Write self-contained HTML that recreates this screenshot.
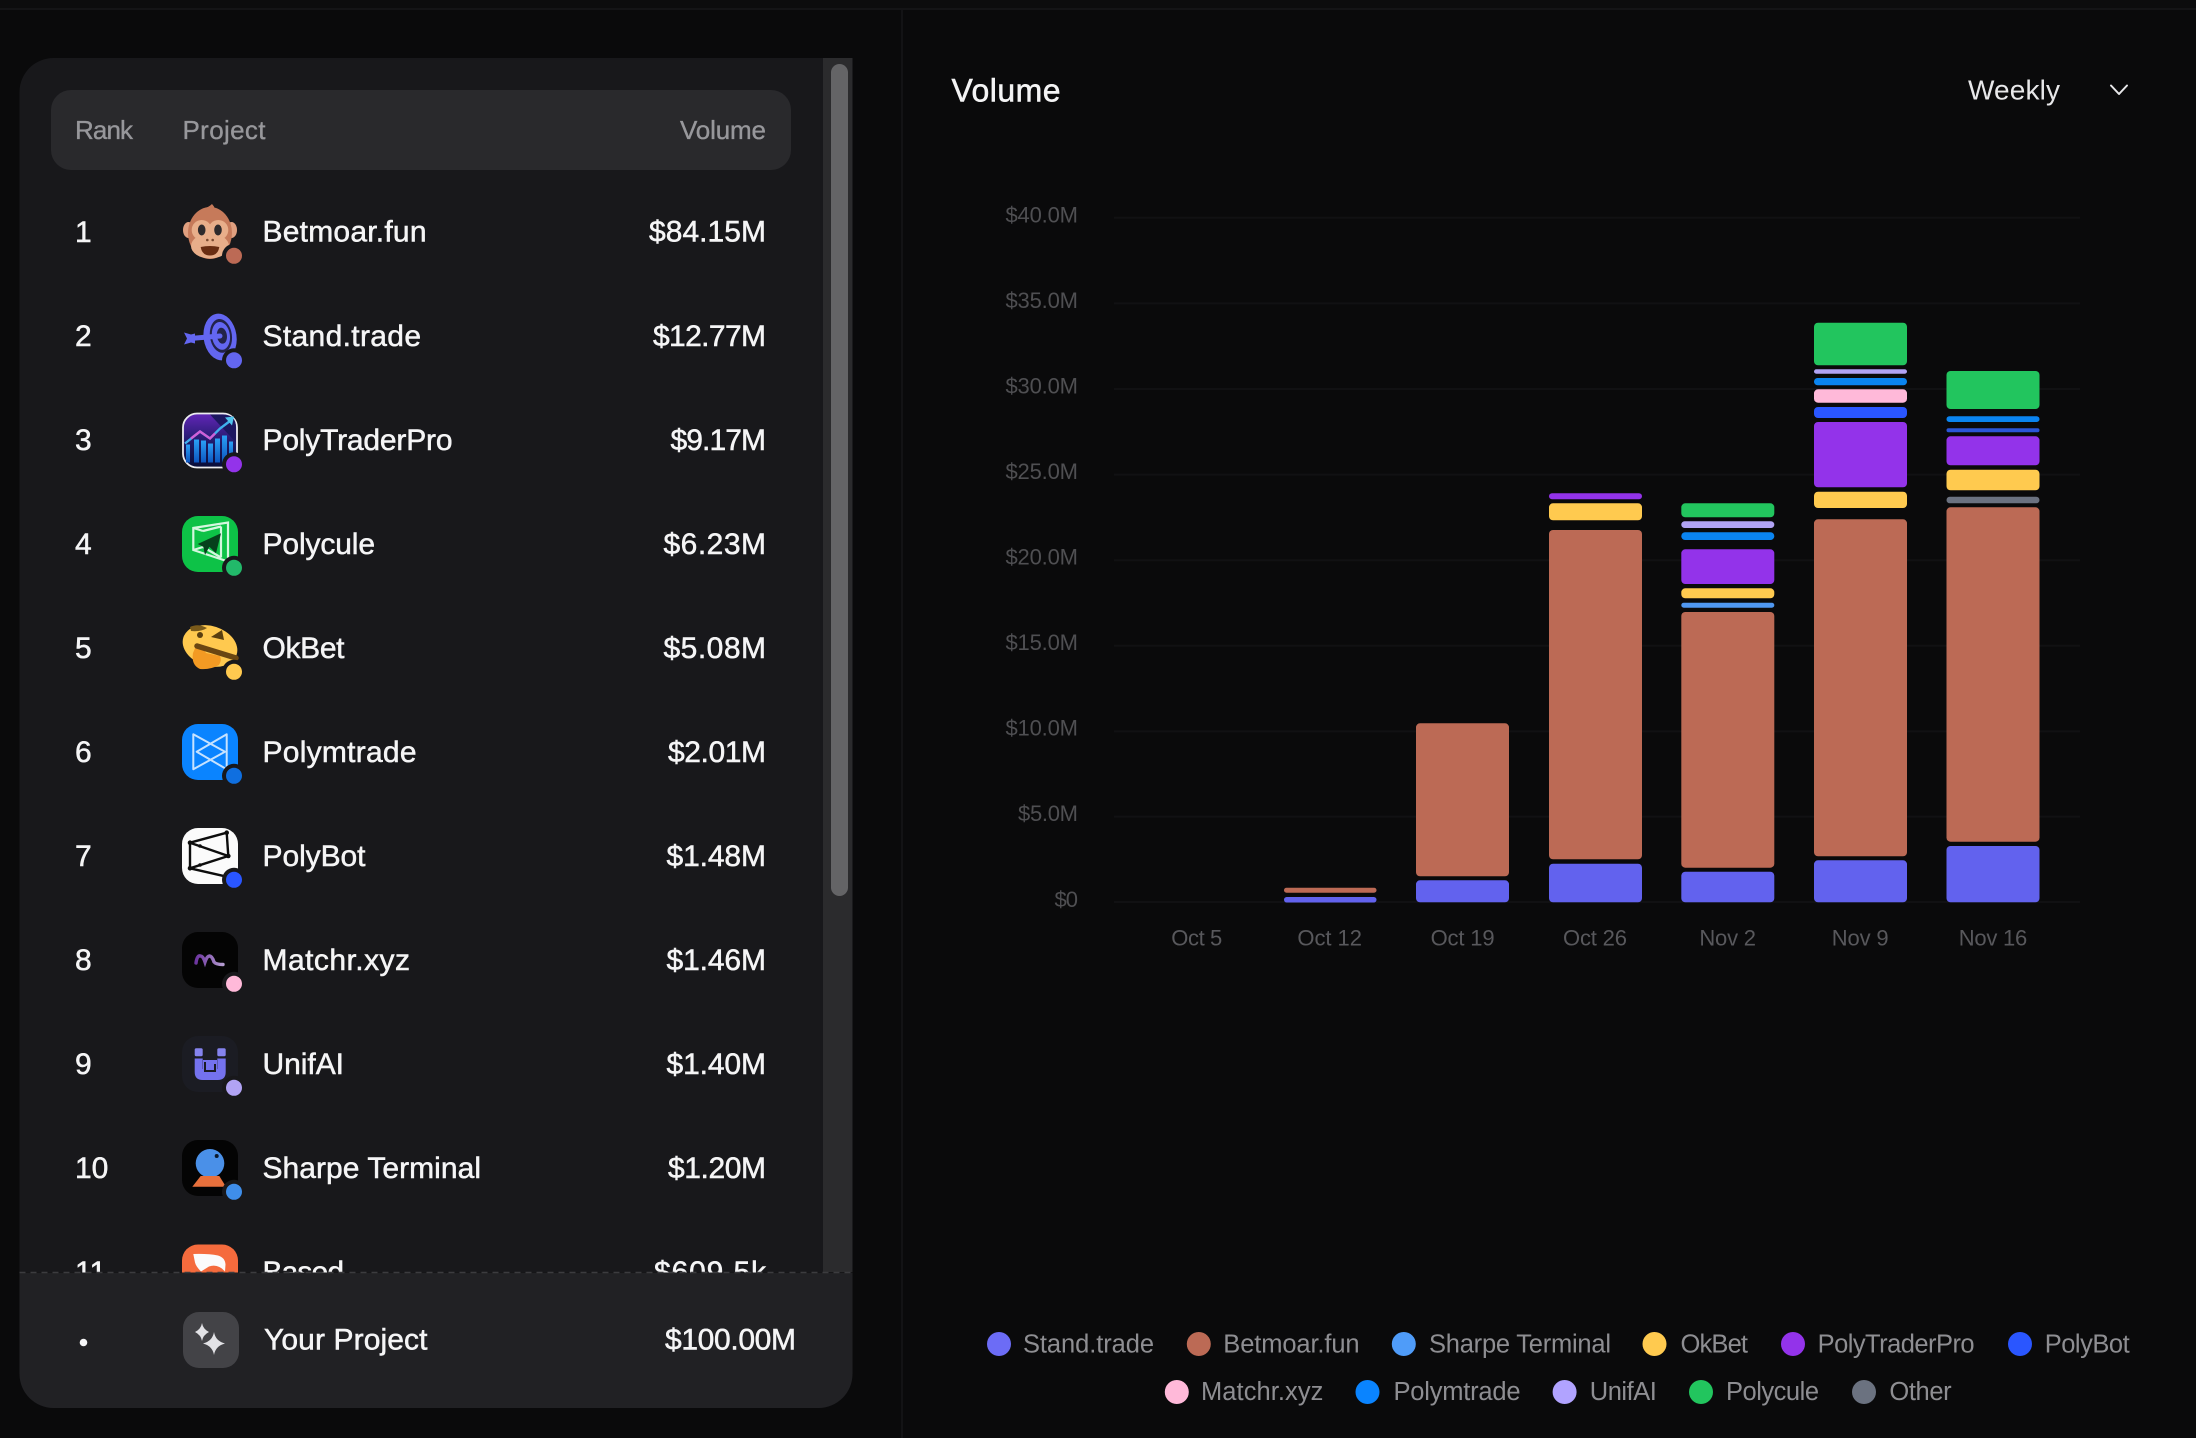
<!DOCTYPE html>
<html lang="en"><head><meta charset="utf-8"><title>Volume Leaderboard</title>
<style>
html,body{margin:0;padding:0;background:#0a0a0b;width:2196px;height:1438px;overflow:hidden}
svg{display:block}
text{font-family:"Liberation Sans",Arial,sans-serif}
.rk,.nm,.vl{font-size:30px;fill:#f5f5f6;stroke:#f5f5f6;stroke-width:.5px}
.hd{font-size:26px;fill:#97979b;stroke:#97979b;stroke-width:.35px}
.ya{font-size:22px;fill:#4f4f52}
.xa{font-size:22px;fill:#58585c}
.lg{font-size:25.5px;fill:#8e8e92}
</style></head><body>
<svg width="2196" height="1438" viewBox="0 0 2196 1438" xmlns="http://www.w3.org/2000/svg">
<defs>
<linearGradient id="ptp" x1="0" y1="0" x2="0" y2="1"><stop offset="0" stop-color="#6326b8"/><stop offset=".55" stop-color="#1d1a66"/><stop offset="1" stop-color="#070d38"/></linearGradient>
<linearGradient id="ptb" x1="0" y1="0" x2="0" y2="1"><stop offset="0" stop-color="#2aa0f5"/><stop offset="1" stop-color="#0d55c0"/></linearGradient>
<linearGradient id="mts" x1="0" y1="0" x2="1" y2="0"><stop offset="0" stop-color="#6d35a0"/><stop offset="1" stop-color="#b49cd0"/></linearGradient>
</defs>
<rect width="2196" height="1438" fill="#0a0a0b"/>
<rect width="2196" height="8" fill="#0c0c0d"/>
<rect y="8" width="2196" height="2" fill="#141416"/>
<rect x="901" y="10" width="2" height="1428" fill="#131315"/>

<!-- left panel -->
<path d="M54 58H852.500V1272H19.500V92A34 34 0 0 1 54 58Z" fill="#18181b"/>
<rect x="823" y="58" width="29.500" height="1214" fill="#2b2b2d"/>
<rect x="831" y="64" width="17" height="832" rx="8.500" fill="#646466"/>
<rect x="51" y="90" width="740" height="80" rx="20" fill="#29292c"/>
<text class="hd" x="75" y="139" textLength="58">Rank</text>
<text class="hd" x="182.500" y="139" textLength="83">Project</text>
<text class="hd" x="680" y="139" textLength="86">Volume</text>

<!-- row 1 -->
<text class="rk" x="75" y="242">1</text><text class="nm" x="262.500" y="241.700" textLength="164">Betmoar.fun</text><text class="vl" x="649" y="241.700" textLength="117">$84.15M</text>
<g transform="translate(182,204)">
<ellipse cx="6.500" cy="26" rx="5.500" ry="8" fill="#E0A080"/><ellipse cx="49.500" cy="26" rx="5.500" ry="8" fill="#E0A080"/>
<path d="M21 5Q27 3 30 0Q32 2 33 5L28 8Z" fill="#C67A5A"/>
<ellipse cx="28" cy="29" rx="22" ry="26" fill="#C67A5A"/>
<circle cx="19.700" cy="26" r="10" fill="#E8AE8A"/><circle cx="36.300" cy="26" r="10" fill="#E8AE8A"/>
<ellipse cx="28" cy="42" rx="19" ry="12.500" fill="#E8AE8A"/>
<ellipse cx="19.700" cy="26" rx="3.800" ry="5.500" fill="#2e2a2c"/><ellipse cx="36" cy="26" rx="3.800" ry="5.500" fill="#2e2a2c"/>
<circle cx="25.300" cy="36" r="1.300" fill="#7a4a30"/><circle cx="30.700" cy="36" r="1.300" fill="#7a4a30"/>
<path d="M18.700 43Q28 41 37.300 43Q36 51.500 28 51.500Q20 51.500 18.700 43Z" fill="#6a2d12"/>
<circle cx="52" cy="51.800" r="12" fill="#18181b"/><circle cx="52" cy="51.800" r="8" fill="#BC6A55"/>
</g>

<!-- row 2 -->
<text class="rk" x="75" y="346">2</text><text class="nm" x="262.500" y="346" textLength="158.500">Stand.trade</text><text class="vl" x="653" y="346" textLength="113">$12.77M</text>
<g transform="translate(182,308.500)">
<g transform="rotate(-8 38 28)">
<ellipse cx="38" cy="28.500" rx="16.500" ry="23.500" fill="#6366F1"/><ellipse cx="39" cy="27.500" rx="11" ry="17" fill="#23234a"/>
<ellipse cx="39" cy="27.500" rx="9" ry="14" fill="#6366F1"/><ellipse cx="40" cy="27.500" rx="5" ry="8" fill="#23234a"/></g>
<path d="M8 30L38 27.500" stroke="#6366F1" stroke-width="5" stroke-linecap="round" fill="none"/>
<path d="M2 24L9 26L13 25L13 35L9 34L2 36L5 30Z" fill="#6366F1"/>
<circle cx="52" cy="51.800" r="12" fill="#18181b"/><circle cx="52" cy="51.800" r="8" fill="#6366F1"/>
</g>

<!-- row 3 -->
<text class="rk" x="75" y="450">3</text><text class="nm" x="262.500" y="450" textLength="190">PolyTraderPro</text><text class="vl" x="670.500" y="450" textLength="95.500">$9.17M</text>
<g transform="translate(182,412.500)">
<rect x="1" y="1" width="54" height="54" rx="14" fill="url(#ptp)" stroke="#ececf0" stroke-width="1.800"/>
<path d="M28 2H41Q54 2 54 15V30Z" fill="#1c1760"/>
<g fill="url(#ptb)"><rect x="4" y="32" width="4" height="18"/><rect x="12" y="27" width="5" height="23"/><rect x="19" y="28" width="5" height="22"/><rect x="26" y="31" width="5" height="19"/><rect x="33" y="26" width="5" height="24"/><rect x="40" y="23" width="5" height="27"/><rect x="47" y="29" width="4" height="20"/></g>
<path d="M3 31L18 19L28 26L38 16L50 7" fill="none" stroke="#3fb0ee" stroke-width="2.400"/>
<path d="M9 26L18 19L28 26L33 21" fill="none" stroke="#d05fd8" stroke-width="2.400"/>
<path d="M43 5L52 4L50 13Z" fill="#4fc4ee"/>
<circle cx="52" cy="51.800" r="12" fill="#18181b"/><circle cx="52" cy="51.800" r="8" fill="#9333EA"/>
</g>

<!-- row 4 -->
<text class="rk" x="75" y="554">4</text><text class="nm" x="262.500" y="554" textLength="112.500">Polycule</text><text class="vl" x="663.500" y="554" textLength="102.500">$6.23M</text>
<g transform="translate(182,516)">
<rect width="56" height="56" rx="16" fill="#0DC247"/>
<path d="M11.300 12V34L46 45.500V6.500ZM21 15L39 10.500M21 31L39 41.500M39 10.500V41.500M11.300 12L21 15M11.300 34L21 31" fill="none" stroke="#d4f7df" stroke-width="2.200"/>
<path d="M15.700 28L39 17.300L34 37.300L27.300 30.700L23 39L21.300 30.700Z" fill="#06401c"/>
<circle cx="52" cy="51.800" r="12" fill="#18181b"/><circle cx="52" cy="51.800" r="8" fill="#22B96A"/>
</g>

<!-- row 5 -->
<text class="rk" x="75" y="658">5</text><text class="nm" x="262.500" y="658" textLength="82">OkBet</text><text class="vl" x="663.500" y="658" textLength="102.500">$5.08M</text>
<g transform="translate(182,620)">
<g transform="rotate(18 28 26)"><ellipse cx="28" cy="26" rx="28" ry="20" fill="#FFC94F"/></g>
<path d="M11 33Q9 45 18 49Q28 50 37 45Q40 40 38 36L24 33L22 30L14 26Z" fill="#F39A23"/>
<path d="M8 7Q16 3 25 8Q19 12 9 11Z" fill="#7a5a1a"/>
<circle cx="18" cy="15" r="3" fill="#5a3f10"/>
<path d="M29 17L40 10L42 20Z" fill="#5a3f10"/>
<path d="M15 26L54 38" stroke="#6a4612" stroke-width="5.500" stroke-linecap="round"/>
<circle cx="52" cy="51.800" r="12" fill="#18181b"/><circle cx="52" cy="51.800" r="8" fill="#FFC94F"/>
</g>

<!-- row 6 -->
<text class="rk" x="75" y="762">6</text><text class="nm" x="262.500" y="762" textLength="154">Polymtrade</text><text class="vl" x="668" y="762" textLength="98">$2.01M</text>
<g transform="translate(182,724)">
<rect width="56" height="56" rx="16" fill="#0A84FF"/>
<path d="M11.300 10.300V45.300L43 27.700L11.300 10.300ZM44.700 10.300V45.300L14.700 27.700L44.700 10.300Z" fill="none" stroke="#c6e2ff" stroke-width="2" stroke-linejoin="round"/>
<circle cx="52" cy="51.800" r="12" fill="#18181b"/><circle cx="52" cy="51.800" r="8" fill="#0F6FE0"/>
</g>

<!-- row 7 -->
<text class="rk" x="75" y="866">7</text><text class="nm" x="262.500" y="866" textLength="103">PolyBot</text><text class="vl" x="666.500" y="866" textLength="99.500">$1.48M</text>
<g transform="translate(182,828)">
<rect width="56" height="56" rx="16" fill="#fbfbfb"/>
<path d="M8 14.700L44.700 4.700L46.300 28L8 40.300ZM8 14.700L46.300 28M8 40.300L44.700 48.700" fill="none" stroke="#0d0d0d" stroke-width="2.400" stroke-linejoin="round"/>
<g fill="#0d0d0d"><circle cx="8" cy="14.700" r="2.300"/><circle cx="44.700" cy="4.700" r="2.300"/><circle cx="46.300" cy="28" r="2.300"/><circle cx="8" cy="40.300" r="2.300"/><circle cx="18" cy="18" r="1.800"/><circle cx="18" cy="37" r="1.800"/></g>
<circle cx="52" cy="51.800" r="12" fill="#18181b"/><circle cx="52" cy="51.800" r="8" fill="#2A56FF"/>
</g>

<!-- row 8 -->
<text class="rk" x="75" y="970">8</text><text class="nm" x="262.500" y="970" textLength="147.500">Matchr.xyz</text><text class="vl" x="666.500" y="970" textLength="99.500">$1.46M</text>
<g transform="translate(182,932)">
<rect width="56" height="56" rx="16" fill="#040404"/>
<path d="M14 31Q15 23 18.500 24Q21 24 23 30Q25 24 27.500 24Q30 24 32 30Q34 32.500 41 32.500" fill="none" stroke="url(#mts)" stroke-width="3.400" stroke-linecap="round"/>
<circle cx="52" cy="51.800" r="12" fill="#18181b"/><circle cx="52" cy="51.800" r="8" fill="#FFB9D9"/>
</g>

<!-- row 9 -->
<text class="rk" x="75" y="1074">9</text><text class="nm" x="262.500" y="1074" textLength="81.500">UnifAI</text><text class="vl" x="666.500" y="1074" textLength="99.500">$1.40M</text>
<g transform="translate(182,1036)">
<rect width="56" height="56" rx="16" fill="#1b1c23"/>
<rect x="12.700" y="12.300" width="8" height="8" rx="1.500" fill="#8583ee"/><rect x="35.300" y="12.300" width="8.400" height="8" rx="1.500" fill="#8583ee"/>
<path d="M12.700 22.500H20.700V33H35.300V22.500H43.700V36Q43.700 44 35.700 44H20.700Q12.700 44 12.700 36Z" fill="#7472ee"/>
<path d="M21 24H35V33H21Z" fill="#7472ee"/>
<path d="M23 26V35H33V28" fill="none" stroke="#1b1c23" stroke-width="2"/>
<circle cx="52" cy="51.800" r="12" fill="#18181b"/><circle cx="52" cy="51.800" r="8" fill="#B1A3F4"/>
</g>

<!-- row 10 -->
<text class="rk" x="75" y="1178">10</text><text class="nm" x="262.500" y="1178" textLength="218.500">Sharpe Terminal</text><text class="vl" x="668" y="1178" textLength="98">$1.20M</text>
<g transform="translate(182,1140)">
<rect width="56" height="56" rx="16" fill="#040404"/>
<circle cx="28" cy="23.300" r="14.300" fill="#4A90E8"/><circle cx="34.700" cy="16" r="2" fill="#0c1a2c"/>
<path d="M18.700 36H37.300L44 46.700H10.300Z" fill="#E8703C"/>
<circle cx="52" cy="51.800" r="12" fill="#18181b"/><circle cx="52" cy="51.800" r="8" fill="#3F8EEA"/>
</g>

<!-- row 11 -->
<text class="rk" x="75" y="1282">11</text><text class="nm" x="262.500" y="1282" textLength="81.500">Based</text><text class="vl" x="654" y="1282" textLength="112">$609.5k</text>
<g transform="translate(182,1244.500)">
<rect width="56" height="56" rx="16" fill="#F56B3D"/>
<path d="M11.300 9.500Q26 9 36 11Q43 13 43.500 20L43 27Q36 19 27 22L19 27Q14 22 13 18Z" fill="#fbfbfb"/>
</g>

<!-- footer -->
<path d="M19.500 1272.500H852.500V1374A34 34 0 0 1 818.500 1408H53.500A34 34 0 0 1 19.500 1374Z" fill="#212124"/>
<line x1="19.500" y1="1272.500" x2="852.500" y2="1272.500" stroke="#3c3c3f" stroke-width="1.500" stroke-dasharray="6 5"/>
<circle cx="83.500" cy="1342.500" r="3.800" fill="#f5f5f6"/>
<rect x="183" y="1312" width="56" height="56" rx="16" fill="#434347"/>
<path d="M202 1323Q203 1329 209 1332Q203 1335 202 1341Q201 1335 195 1332Q201 1329 202 1323Z" fill="#e2e2e6"/>
<path d="M214 1332Q215.500 1341 225 1343.500Q215.500 1346 214 1355Q212.500 1346 203 1343.500Q212.500 1341 214 1332Z" fill="#e2e2e6"/>
<text class="nm" x="264" y="1349.300" textLength="163.500">Your Project</text>
<text class="vl" x="665" y="1349.300" textLength="131">$100.00M</text>

<!-- right header -->
<text x="951.500" y="101.500" font-size="32" fill="#f4f4f5" stroke="#f4f4f5" stroke-width=".5" textLength="109">Volume</text>
<text x="1968" y="99.500" font-size="28" fill="#e8e8ea" textLength="92">Weekly</text>
<path d="M2111 85.500L2119 94L2127 85.500" fill="none" stroke="#e8e8ea" stroke-width="2" stroke-linecap="round" stroke-linejoin="round"/>

<!-- grid -->
<g stroke="#111113" stroke-width="2">
<line x1="1114" x2="2080" y1="217.800" y2="217.800"/><line x1="1114" x2="2080" y1="303.400" y2="303.400"/><line x1="1114" x2="2080" y1="389" y2="389"/><line x1="1114" x2="2080" y1="474.600" y2="474.600"/><line x1="1114" x2="2080" y1="560.200" y2="560.200"/><line x1="1114" x2="2080" y1="645.800" y2="645.800"/><line x1="1114" x2="2080" y1="731.400" y2="731.400"/><line x1="1114" x2="2080" y1="816.600" y2="816.600"/><line x1="1114" x2="2080" y1="902" y2="902"/>
</g>
<text class="ya" x="1005.500" y="222.500" textLength="72.500">$40.0M</text>
<text class="ya" x="1005.500" y="308" textLength="72.500">$35.0M</text>
<text class="ya" x="1005.500" y="393.500" textLength="72.500">$30.0M</text>
<text class="ya" x="1005.500" y="479" textLength="72.500">$25.0M</text>
<text class="ya" x="1005.500" y="564.500" textLength="72.500">$20.0M</text>
<text class="ya" x="1005.500" y="650" textLength="72.500">$15.0M</text>
<text class="ya" x="1005.500" y="735.500" textLength="72.500">$10.0M</text>
<text class="ya" x="1018" y="821" textLength="60">$5.0M</text>
<text class="ya" x="1054.500" y="907" textLength="23.500">$0</text>
<text class="xa" x="1171.300" y="945.500" textLength="51">Oct 5</text>
<text class="xa" x="1297.400" y="945.500" textLength="64.600">Oct 12</text>
<text class="xa" x="1430.600" y="945.500" textLength="64">Oct 19</text>
<text class="xa" x="1563" y="945.500" textLength="64">Oct 26</text>
<text class="xa" x="1699.400" y="945.500" textLength="56.600">Nov 2</text>
<text class="xa" x="1831.800" y="945.500" textLength="56.800">Nov 9</text>
<text class="xa" x="1958.700" y="945.500" textLength="68.600">Nov 16</text>

<!-- bars -->
<g fill="#6262EE">
<rect x="1284" y="897" width="92.500" height="5.500" rx="2.700"/>
<rect x="1416" y="880.300" width="93" height="22" rx="4"/>
<rect x="1549" y="863.700" width="93" height="38.600" rx="4"/>
<rect x="1681.300" y="871.700" width="93" height="30.600" rx="4"/>
<rect x="1814" y="860.300" width="93" height="42" rx="4"/>
<rect x="1946.500" y="846" width="93" height="56.300" rx="4"/>
</g>
<g fill="#BC6A55">
<rect x="1284" y="887.700" width="92.500" height="5" rx="2.500"/>
<rect x="1416" y="723.300" width="93" height="153" rx="4"/>
<rect x="1549" y="530" width="93" height="329.300" rx="4"/>
<rect x="1681.300" y="612" width="93" height="255.700" rx="4"/>
<rect x="1814" y="519.300" width="93" height="337" rx="4"/>
<rect x="1946.500" y="507.300" width="93" height="334.400" rx="4"/>
</g>
<rect x="1549" y="493.300" width="93" height="6" rx="3" fill="#9333EA"/>
<rect x="1549" y="503.300" width="93" height="17" rx="4" fill="#FFCA4F"/>
<rect x="1681.300" y="503.300" width="93" height="14" rx="4" fill="#22C55E"/>
<rect x="1681.300" y="521.300" width="93" height="6.700" rx="3.300" fill="#B1A3F4"/>
<rect x="1681.300" y="532.300" width="93" height="7.700" rx="3.800" fill="#0A84F0"/>
<rect x="1681.300" y="549.300" width="93" height="34.700" rx="4" fill="#9333EA"/>
<rect x="1681.300" y="588.300" width="93" height="10" rx="4" fill="#FFCA4F"/>
<rect x="1681.300" y="602.700" width="93" height="5" rx="2.500" fill="#4F97F0"/>
<rect x="1814" y="322.700" width="93" height="42.600" rx="4" fill="#22C55E"/>
<rect x="1814" y="369.300" width="93" height="4.400" rx="2.200" fill="#B1A3F4"/>
<rect x="1814" y="378" width="93" height="7.300" rx="3.600" fill="#0A84F0"/>
<rect x="1814" y="389.300" width="93" height="13.400" rx="4" fill="#FFB9D9"/>
<rect x="1814" y="407" width="93" height="11" rx="4" fill="#2A56FF"/>
<rect x="1814" y="422" width="93" height="65.300" rx="4" fill="#9333EA"/>
<rect x="1814" y="491.700" width="93" height="16.300" rx="4" fill="#FFCA4F"/>
<rect x="1946.500" y="371" width="93" height="38" rx="4" fill="#22C55E"/>
<rect x="1946.500" y="416.300" width="93" height="5.700" rx="2.800" fill="#0A84F0"/>
<rect x="1946.500" y="428.300" width="93" height="4" rx="2" fill="#2A56D8"/>
<rect x="1946.500" y="436.300" width="93" height="29" rx="4" fill="#9333EA"/>
<rect x="1946.500" y="469.700" width="93" height="20.600" rx="4" fill="#FFCA4F"/>
<rect x="1946.500" y="496.700" width="93" height="6.600" rx="3.300" fill="#6B7280"/>

<!-- legend -->
<circle cx="999" cy="1344" r="12" fill="#6C6CF6"/><text class="lg" x="1023" y="1352.300" textLength="131">Stand.trade</text>
<circle cx="1198.800" cy="1344" r="12" fill="#BC6A55"/><text class="lg" x="1223.300" y="1352.300" textLength="136.300">Betmoar.fun</text>
<circle cx="1403.800" cy="1344" r="12" fill="#4F9CF9"/><text class="lg" x="1429" y="1352.300" textLength="182">Sharpe Terminal</text>
<circle cx="1654.500" cy="1344" r="12" fill="#FFCA4F"/><text class="lg" x="1680.500" y="1352.300" textLength="67.500">OkBet</text>
<circle cx="1793" cy="1344" r="12" fill="#9333EA"/><text class="lg" x="1817.600" y="1352.300" textLength="157">PolyTraderPro</text>
<circle cx="2020" cy="1344" r="12" fill="#2A56FF"/><text class="lg" x="2044.700" y="1352.300" textLength="85">PolyBot</text>
<circle cx="1176.800" cy="1392" r="12" fill="#FFB9D9"/><text class="lg" x="1201" y="1400" textLength="122.400">Matchr.xyz</text>
<circle cx="1367.500" cy="1392" r="12" fill="#0A84FF"/><text class="lg" x="1393.500" y="1400" textLength="127">Polymtrade</text>
<circle cx="1564.600" cy="1392" r="12" fill="#B1A3FF"/><text class="lg" x="1589.800" y="1400" textLength="67">UnifAI</text>
<circle cx="1701" cy="1392" r="12" fill="#22C55E"/><text class="lg" x="1726" y="1400" textLength="93">Polycule</text>
<circle cx="1864" cy="1392" r="12" fill="#6B7280"/><text class="lg" x="1889.400" y="1400" textLength="62.200">Other</text>
</svg>
</body></html>
